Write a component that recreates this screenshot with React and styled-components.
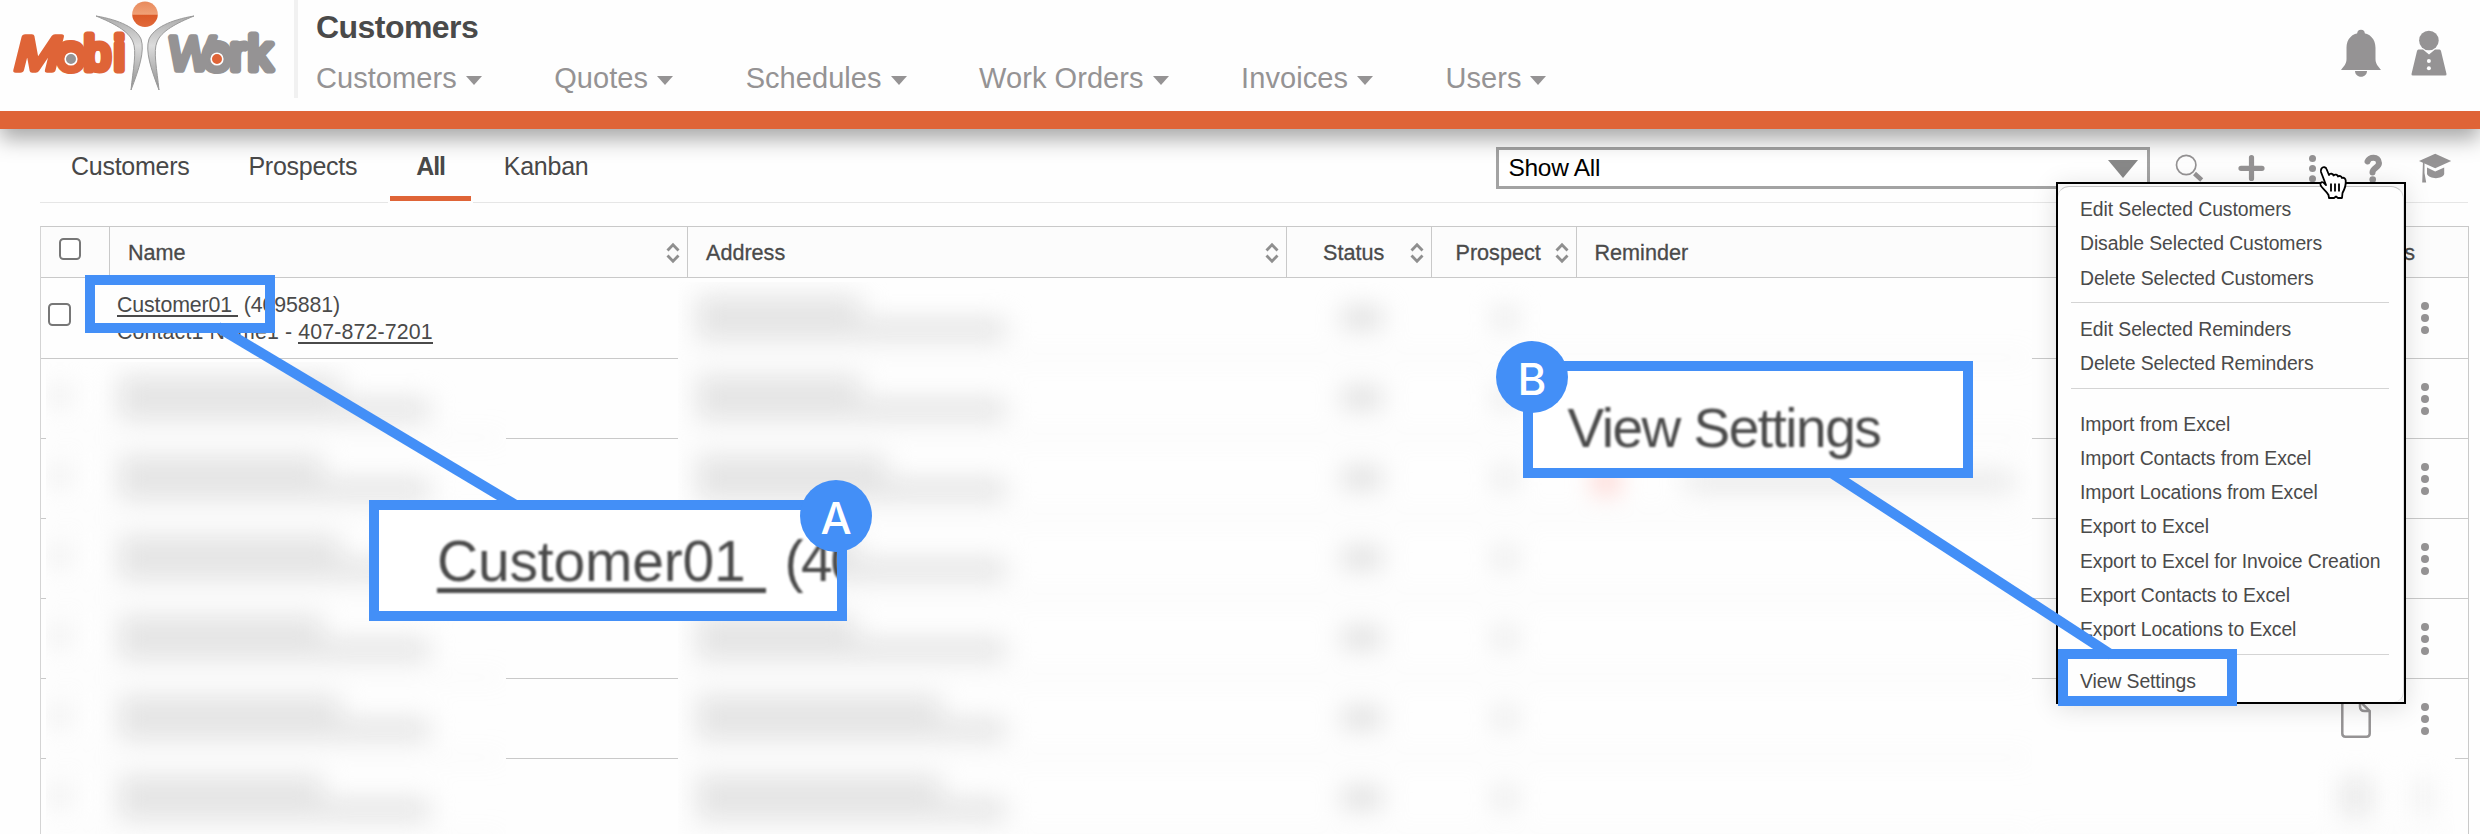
import React from "react";
import styled, { createGlobalStyle } from "styled-components";

const ORANGE = "#df6437";
const BLUE = "#438ff7";
const GREY = "#959394";
const LINE = "#c9c9c9";

const GlobalStyle = createGlobalStyle`
  *, *::after { box-sizing: border-box; }
  body {
    margin: 0;
    background: #fefefe;
    color: #4a4a4a;
    font-family: "Liberation Sans", Arial, sans-serif;
  }
`;

const Page = styled.div`
  position: relative;
  width: 2480px;
  height: 834px;
  overflow: hidden;
  background: #fefefe;
`;

/* ---------- header ---------- */

const Header = styled.header`
  position: relative;
  display: flex;
  height: 129px;
  border-bottom: 18px solid ${ORANGE};
  background: #fefefe;
  box-shadow: 0 10px 20px rgba(0, 0, 0, 0.34);
`;

const LogoBox = styled.div`
  width: 298px;
  height: 98px;
  border-right: 4px solid #f1f1f1;
`;

const HeaderMain = styled.div`
  padding-left: 18px;
`;

const Title = styled.h1`
  margin: 0;
  height: 54px;
  line-height: 54px;
  font-size: 32px;
  font-weight: 700;
  letter-spacing: -0.55px;
`;

const Nav = styled.nav`
  display: flex;
  gap: 72.500px;
`;

const NavItem = styled.a`
  display: flex;
  align-items: center;
  gap: 9px;
  height: 48px;
  line-height: 48px;
  font-size: 29px;
  letter-spacing: 0.06px;
  color: ${GREY};
  white-space: nowrap;
`;

const Caret = styled.span`
  width: 0;
  height: 0;
  margin-top: 4px;
  border: 8.5px solid transparent;
  border-top: 9px solid ${GREY};
  border-bottom: 0;
`;

const HeaderIcons = styled.div`
  display: flex;
  gap: 30px;
  margin-left: auto;
  padding: 29px 33px 0 0;
`;

/* ---------- tab bar ---------- */

const TabBar = styled.div`
  display: flex;
  height: 74px;
  margin: 0 12px 0 40px;
  padding-left: 5px;
  border-bottom: 1px solid #e6e6e6;
`;

const Tab = styled.a`
  position: relative;
  height: 74px;
  margin-right: 7px;
  padding: 0 26px;
  line-height: 74px;
  font-size: 25px;
  font-weight: ${(p) => (p.$active ? 700 : 400)};
  letter-spacing: ${(p) => (p.$active ? -1.1 : -0.27)}px;
  color: #484848;
  &::after {
    content: "";
    display: ${(p) => (p.$active ? "block" : "none")};
    position: absolute;
    inset: auto -2px 0 -2px;
    height: 7px;
    border: solid #fefefe;
    border-width: 0 2px 2px;
    background: ${ORANGE};
  }
`;

const Tools = styled.div`
  display: flex;
  align-items: flex-start;
  margin-left: auto;
`;

const Select = styled.div`
  display: flex;
  align-items: center;
  justify-content: space-between;
  width: 654px;
  height: 42px;
  margin: 18px 24px 0 0;
  padding: 0 9px 0 9.500px;
  border: 3px solid #a3a3a3;
  background: #fff;
  color: #000;
  font-size: 24.5px;
  letter-spacing: -0.3px;
`;

const SelectArrow = styled.span`
  width: 0;
  height: 0;
  margin-top: 2px;
  border: 15px solid transparent;
  border-top: 18px solid #888;
  border-bottom: 0;
`;

const ToolIcons = styled.svg`
  display: block;
  width: 294px;
  height: 60px;
`;

/* ---------- table ---------- */

const Table = styled.section`
  margin: 23px 11px 0 40px;
  border: 1px solid ${LINE};
  border-bottom: 0;
  border-left-color: #d4d4d4;
`;

const HeadRow = styled.div`
  display: grid;
  grid-template-columns: 69px 578px 599px 145px 145px 1fr;
  height: 51px;
  border-bottom: 1px solid ${LINE};
  background: #fcfcfc;
`;

const HeadCell = styled.div`
  display: flex;
  align-items: center;
  justify-content: space-between;
  padding: 1px 7px 0 ${(p) => p.$left}px;
  border-right: 1px solid ${LINE};
  font-size: 21.6px;
  -webkit-text-stroke: 0.3px #4a4a4a;
  &:last-child { border-right: 0; padding-right: 53px; }
`;

const Checkbox = styled.span`
  display: block;
  flex: none;
  width: ${(p) => p.$size}px;
  height: ${(p) => p.$size}px;
  margin-top: -7px;
  border: 2px solid #777;
  border-radius: 4.5px;
  background: #fff;
`;

const Row = styled.div`
  display: flex;
  align-items: center;
  height: ${(p) => (p.$first ? 81 : 80)}px;
  padding: 0 39px 0 7px;
  border-bottom: 1px solid ${LINE};
`;

const NameCell = styled.div`
  margin: 2px 0 0 46px;
  font-size: 21.35px;
  line-height: 27.5px;
  white-space: pre;
`;

const NameLine = styled.div`
  letter-spacing: ${(p) => p.$spacing}px;
`;

const Link = styled.a`
  border-bottom: 2px solid #4a4a4a;
  display: inline-block;
  line-height: 20px;
`;

const RowActions = styled.div`
  display: flex;
  align-items: center;
  gap: 50px;
  margin-left: auto;
`;

/* ---------- blurred customer data ---------- */

const Redacted = styled.div`
  position: absolute;
  left: ${(p) => p.$x}px;
  top: ${(p) => p.$y}px;
  width: ${(p) => p.$w}px;
  bottom: 0;
  overflow: hidden;
  background: #fefefe;
`;

const Blurred = styled.div`
  margin-top: ${(p) => p.$shift}px;
  filter: blur(13px);
`;

const BlurRow = styled.div`
  display: grid;
  grid-template-columns: ${(p) => p.$cols};
  height: 80px;
  border-bottom: 1px solid #d5d5d5;
`;

const BlurCell = styled.div`
  padding-top: ${(p) => p.$top || 19}px;
`;

const Bar = styled.div`
  width: ${(p) => p.$w}px;
  height: ${(p) => p.$h || 19}px;
  margin-bottom: 4px;
  margin-left: ${(p) => p.$left || 0}px;
  background: ${(p) => p.$c || "#e0e0e0"};
`;

const ReminderBlur = styled.div`
  display: flex;
  justify-content: space-between;
  align-items: center;
  width: 420px;
`;

/* ---------- menu ---------- */

const Menu = styled.div`
  position: absolute;
  left: 2056px;
  top: 182px;
  width: 350px;
  height: 522px;
  border: 2px solid #000;
  background: #f7f7f7;
  box-shadow: 0 4px 24px rgba(0, 0, 0, 0.13);
`;

const MenuList = styled.div`
  height: 516px;
  margin-top: 2px;
  padding: 5px 14px 0 13px;
  border-top: 1px solid #c4c4c4;
  border-right: 1px solid #dedede;
  border-radius: 11px 13px 10px 0;
  background: #fefefe;
`;

const MenuGroup = styled.div`
  height: ${(p) => p.$h}px;
  padding-top: ${(p) => p.$top}px;
  border-bottom: ${(p) => (p.$last ? 0 : 1)}px solid #d4d4d4;
`;

const MenuItem = styled.div`
  height: 34.3px;
  padding-left: 9px;
  line-height: 34.3px;
  font-size: 19.4px;
  letter-spacing: -0.1px;
  white-space: nowrap;
`;

const Cursor = styled.svg`
  position: absolute;
  left: 2317px;
  top: 165px;
`;

/* ---------- callouts ---------- */

const Connectors = styled.svg`
  position: absolute;
  inset: 0;
`;

const Marker = styled.div`
  position: absolute;
  left: ${(p) => p.$x}px;
  top: ${(p) => p.$y}px;
  width: ${(p) => p.$w}px;
  height: ${(p) => p.$h}px;
  border: 10.5px solid ${BLUE};
`;

const Magnified = styled(Marker)`
  overflow: hidden;
  background: #fff;
`;

const MagnifiedText = styled.div`
  padding-left: ${(p) => p.$left}px;
  font-size: ${(p) => p.$size}px;
  line-height: ${(p) => p.$line}px;
  letter-spacing: ${(p) => p.$spacing}px;
  word-spacing: ${(p) => p.$words || 0}px;
  white-space: pre;
  filter: blur(0.8px);
`;

const MagnifiedLink = styled.span`
  display: inline-block;
  height: 83px;
  border-bottom: 5px solid #4a4a4a;
`;

const MagnifiedRest = styled.span`
  letter-spacing: -2.5px;
`;

const Badge = styled.div`
  position: absolute;
  left: ${(p) => p.$x}px;
  top: ${(p) => p.$y}px;
  width: 72px;
  height: 72px;
  border-radius: 50%;
  background: ${BLUE};
  color: #fff;
  font-family: Inter, "Liberation Sans", sans-serif;
  font-size: 44px;
  font-weight: 500;
  line-height: 77px;
  text-align: center;
`;

/* ---------- drawings ---------- */

const Logo = () => (
  <svg width="290" height="98" viewBox="0 0 290 98">
    <defs>
      <linearGradient id="head" x1="0" y1="0" x2="0" y2="1">
        <stop offset="0" stopColor="#e88a5c" />
        <stop offset="0.5" stopColor="#f0a076" />
        <stop offset="0.55" stopColor="#dc5a28" />
        <stop offset="1" stopColor="#e0693a" />
      </linearGradient>
      <linearGradient id="body" x1="0" y1="0" x2="0" y2="1">
        <stop offset="0" stopColor="#aaa" />
        <stop offset="0.4" stopColor="#dcdcdc" />
        <stop offset="1" stopColor="#8f8f8f" />
      </linearGradient>
    </defs>
    <g fontSize="48" strokeWidth="5.500" strokeLinejoin="round" fontFamily="Liberation Sans">
      <g fill={ORANGE} stroke={ORANGE}>
        <text transform="translate(12 70) skewX(-14)" textLength="45" lengthAdjust="spacingAndGlyphs">M</text>
        <text x="57.500" y="70" strokeWidth="8">o</text>
        <text x="84" y="70" strokeWidth="7">b</text>
        <text x="114" y="70" strokeWidth="7">i</text>
      </g>
      <g fill={GREY} stroke={GREY}>
        <text transform="translate(167 70) skewX(-6)" textLength="45" lengthAdjust="spacingAndGlyphs">W</text>
        <text x="203.500" y="70" strokeWidth="8">o</text>
        <text x="230" y="70" strokeWidth="7">r</text>
        <text x="248" y="70" strokeWidth="7">k</text>
      </g>
    </g>
    <circle cx="71" cy="59" r="9" fill={ORANGE} />
    <circle cx="71" cy="59" r="5.8" fill={GREY} stroke="#fff" strokeWidth="1.6" />
    <circle cx="217" cy="59" r="9" fill={GREY} />
    <circle cx="217" cy="59" r="5.8" fill={ORANGE} stroke="#fff" strokeWidth="1.6" />
    <g fill="url(#body)" stroke="#9a9a9a" strokeWidth="1">
      <path d="M96 16c24 4 40 12 45 23 4 12-2 30-10 51 2-20 6-39 2-48-4-11-20-19-37-26z" />
      <path d="M194 16c-24 4-40 12-45 23-4 12 2 30 10 51-2-20-6-39-2-48 4-11 20-19 37-26z" />
    </g>
    <circle cx="145" cy="14.2" r="12.8" fill="url(#head)" />
  </svg>
);

const Bell = () => (
  <svg width="40" height="48" viewBox="0 0 40 48" fill={GREY}>
    <circle cx="20" cy="4.500" r="3.8" />
    <path d="M5.500 19C5.500 10 11 4 20 4s14.500 6 14.500 15v11c0 5 2.500 7 5.500 11H0c3-4 5.500-6 5.500-11z" />
    <path d="M14 42h12c0 3-2.500 5.800-6 5.800S14 45 14 42z" />
  </svg>
);

const Person = () => (
  <svg width="36" height="48" viewBox="0 0 36 48">
    <g fill={GREY}>
      <circle cx="17.900" cy="11.500" r="9.800" />
      <path d="M7.500 20.500H12l6 5 6-5h4.500Q29.700 20.500 30 22l5.500 23q.3 1.500-1.500 1.500H2Q.2 46.500.5 45L6 22q.3-1.500 1.500-1.500z" />
    </g>
    <circle cx="17.900" cy="32" r="2" fill="#fff" />
    <circle cx="17.900" cy="39.300" r="2" fill="#fff" />
  </svg>
);

const Toolbar = () => (
  <ToolIcons viewBox="2174 129 294 60" fill={GREY} stroke="none">
    <circle cx="2186.200" cy="165" r="9.700" fill="none" stroke={GREY} strokeWidth="1.700" />
    <path d="M2194.500 173.500l7.200 6.500" stroke={GREY} strokeWidth="4.400" />
    <path d="M2251.500 157.500v21M2241 168.300h21" stroke={GREY} strokeWidth="5.200" strokeLinecap="round" />
    <circle cx="2312.500" cy="158.500" r="3.500" />
    <circle cx="2312.500" cy="168.500" r="3.500" />
    <circle cx="2312.500" cy="178.700" r="3.500" />
    <path d="M2367.500 161.500c1-4.500 11.500-6 11.500 1.500 0 5-6.500 4.500-6.500 9.500" fill="none" stroke={GREY} strokeWidth="6" strokeLinecap="round" />
    <circle cx="2372.700" cy="179.500" r="3.300" />
    <path d="M2419 161l16.200-7.300 16 7.300-16 7.200z" />
    <path d="M2427 167.500l8.200 4 9-4v6.500c-1.500 5.500-15 5.500-17.200 0z" />
    <path d="M2423 161h1.500v12l1.700 9.500h-4z" />
  </ToolIcons>
);

const SortIcon = () => (
  <svg width="14" height="22" viewBox="0 0 14 22" fill="none" stroke="#8f8f8f" strokeWidth="2.800">
    <path d="M1.500 8.500L7 2.700l5.500 5.800M1.500 13.500L7 19.300l5.500-5.800" />
  </svg>
);

const DocIcon = () => (
  <svg width="30" height="38" viewBox="0 0 30 38" fill="none" stroke={GREY} strokeWidth="2.500">
    <path d="M19 1.300H4.500Q1.300 1.300 1.300 4.500v29q0 3.200 3.200 3.200h21q3.200 0 3.200-3.200V11L19 1.300" />
    <path d="M19 2v4.500q0 4.500 4.500 4.500H29" />
  </svg>
);

const Dots = () => (
  <svg width="8" height="32" viewBox="0 0 8 32" fill={GREY}>
    <circle cx="4" cy="4" r="4" />
    <circle cx="4" cy="16" r="4" />
    <circle cx="4" cy="28" r="4" />
  </svg>
);

const NAV = ["Customers", "Quotes", "Schedules", "Work Orders", "Invoices", "Users"];
const ADDRESS_WIDTHS = [165, 165, 190, 160, 160, 245, 245];

export default function App() {
  return (
    <Page>
      <GlobalStyle />
      <Header>
        <LogoBox><Logo /></LogoBox>
        <HeaderMain>
          <Title>Customers</Title>
          <Nav>
            {NAV.map((label) => (
              <NavItem key={label}>{label}<Caret /></NavItem>
            ))}
          </Nav>
        </HeaderMain>
        <HeaderIcons><Bell /><Person /></HeaderIcons>
      </Header>

      <TabBar>
        <Tab>Customers</Tab>
        <Tab>Prospects</Tab>
        <Tab $active>All</Tab>
        <Tab>Kanban</Tab>
        <Tools>
          <Select>Show All<SelectArrow /></Select>
          <Toolbar />
        </Tools>
      </TabBar>

      <Table>
        <HeadRow>
          <HeadCell $left={18}><Checkbox $size={22} /></HeadCell>
          <HeadCell $left={18}>Name<SortIcon /></HeadCell>
          <HeadCell $left={18}>Address<SortIcon /></HeadCell>
          <HeadCell $left={36}>Status<SortIcon /></HeadCell>
          <HeadCell $left={23.500}>Prospect<SortIcon /></HeadCell>
          <HeadCell $left={17.500}>Reminder<span>Actions</span></HeadCell>
        </HeadRow>
        {ADDRESS_WIDTHS.map((_, i) => (
          <Row key={i} $first={i === 0}>
            {i === 0 && (
              <>
                <Checkbox $size={23} />
                <NameCell>
                  <NameLine $spacing={-0.12}><Link>{"Customer01 "}</Link>{" (4095881)"}</NameLine>
                  <NameLine $spacing={0.13}>Contact1 Name1 - <Link>407-872-7201</Link></NameLine>
                </NameCell>
              </>
            )}
            <RowActions><DocIcon /><Dots /></RowActions>
          </Row>
        ))}
      </Table>

      <Redacted $x={46} $y={362} $w={460}>
        <Blurred $shift={-4}>
          {[0, 1, 2, 3, 4, 5].map((i) => (
            <BlurRow key={i} $cols="72px 1fr">
              <BlurCell $top={28}><Bar $w={20} $h={20} $left={4} $c="#ebebeb" /></BlurCell>
              <BlurCell>
                <Bar $w={i % 2 ? 205 : 222} />
                <Bar $w={312} />
              </BlurCell>
            </BlurRow>
          ))}
        </Blurred>
      </Redacted>

      <Redacted $x={678} $y={282} $w={1354}>
        <Blurred $shift={-4}>
          {ADDRESS_WIDTHS.map((w, i) => (
            <BlurRow key={i} $cols="18px 646px 153px 100px 1fr">
              <span />
              <BlurCell>
                <Bar $w={w} />
                <Bar $w={310} />
              </BlurCell>
              <BlurCell $top={31}><Bar $w={40} $h={18} $c="#d8d8d8" /></BlurCell>
              <BlurCell $top={31}><Bar $w={20} $h={18} /></BlurCell>
              {i === 2 && (
                <BlurCell $top={32}>
                  <ReminderBlur>
                    <Bar $w={22} $h={22} $c="#ffc4be" />
                    <Bar $w={330} $h={15} $c="#e2e2e2" />
                  </ReminderBlur>
                </BlurCell>
              )}
            </BlurRow>
          ))}
        </Blurred>
      </Redacted>

      <Redacted $x={2032} $y={738} $w={423}>
        <Blurred $shift={20}>
          <BlurRow $cols="309px 75px 1fr">
            <span />
            <BlurCell $top={20}><Bar $w={30} $h={38} $c="#e8e8e8" /></BlurCell>
            <BlurCell $top={22}><Bar $w={14} $h={34} $c="#ececec" /></BlurCell>
          </BlurRow>
        </Blurred>
      </Redacted>

      <Menu>
        <MenuList>
          <MenuGroup $h={111} $top={0}>
            <MenuItem>Edit Selected Customers</MenuItem>
            <MenuItem>Disable Selected Customers</MenuItem>
            <MenuItem>Delete Selected Customers</MenuItem>
          </MenuGroup>
          <MenuGroup $h={86} $top={8.500}>
            <MenuItem>Edit Selected Reminders</MenuItem>
            <MenuItem>Delete Selected Reminders</MenuItem>
          </MenuGroup>
          <MenuGroup $h={266} $top={17.500}>
            <MenuItem>Import from Excel</MenuItem>
            <MenuItem>Import Contacts from Excel</MenuItem>
            <MenuItem>Import Locations from Excel</MenuItem>
            <MenuItem>Export to Excel</MenuItem>
            <MenuItem>Export to Excel for Invoice Creation</MenuItem>
            <MenuItem>Export Contacts to Excel</MenuItem>
            <MenuItem>Export Locations to Excel</MenuItem>
          </MenuGroup>
          <MenuGroup $h={46} $top={8.500} $last>
            <MenuItem>View Settings</MenuItem>
          </MenuGroup>
        </MenuList>
      </Menu>

      <Cursor width="32" height="36" viewBox="0 0 32 36">
        <path
          d="M4.500 3.500C6 1.500 9 2 9.500 4l2.500 6c1-2 4-1.500 4.500.5 1.500-1.500 4-1 4.500 1 1.500-1 3.500-.5 4 1.500 2-.8 3.500.5 3.700 2.500.5 5-.7 8-3.200 12.500l-.5 5h-4l-2-1.500-2 1.500h-5l-.5-3c-2-4-7-7-8-10-.5-2.500 1.500-4 4-1.500l1.500 1.500L4 7c-.5-1.500 0-2.500.5-3.500z"
          fill="#fff"
          stroke="#000"
          strokeWidth="1.800"
          strokeLinejoin="round"
        />
        <path d="M14 18.500v8M18 18.500v8M22 18.500v8" stroke="#000" strokeWidth="1.800" />
      </Cursor>

      <Connectors width="2480" height="834" stroke={BLUE} strokeWidth="10.300">
        <path d="M217.600 327L515.400 505" />
        <path d="M1830 472L2111.700 655" />
      </Connectors>

      <Marker $x={85} $y={275} $w={189.500} $h={57.500} />
      <Marker $x={2057.500} $y={649} $w={179.500} $h={56.500} />

      <Magnified $x={369} $y={499.500} $w={478} $h={121}>
        <MagnifiedText $left={58} $size={57} $line={103} $spacing={-0.2} $words={5}>
          <MagnifiedLink>{"Customer01 "}</MagnifiedLink>
          <MagnifiedRest>{" (40"}</MagnifiedRest>
        </MagnifiedText>
      </Magnified>
      <Magnified $x={1523} $y={361} $w={449.500} $h={116.500}>
        <MagnifiedText $left={34.500} $size={55} $line={114} $spacing={-1.5}>
          View Settings
        </MagnifiedText>
      </Magnified>

      <Badge $x={800} $y={480}>A</Badge>
      <Badge $x={1496} $y={341}>B</Badge>
    </Page>
  );
}
